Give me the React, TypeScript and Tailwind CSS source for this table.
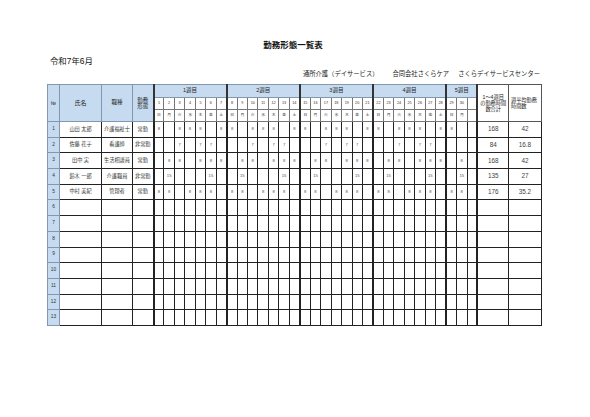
import React from "react";

type Row = {
  no: number;
  name: string;
  role: string;
  type: string;
  val: string;
  days: number[];
  total: string;
  avg: string;
};

const rows: Row[] = [
  { no: 1, name: "山田 太郎", role: "介護福祉士", type: "常勤", val: "8", days: [1, 3, 4, 5, 7, 8, 10, 11, 12, 14, 15, 17, 18, 19, 21, 22, 24, 25, 26, 28, 29], total: "168", avg: "42" },
  { no: 2, name: "佐藤 花子", role: "看護師", type: "非常勤", val: "7", days: [3, 5, 6, 10, 12, 13, 17, 19, 20, 24, 26, 27], total: "84", avg: "16.8" },
  { no: 3, name: "田中 実", role: "生活相談員", type: "常勤", val: "8", days: [2, 3, 5, 6, 7, 9, 10, 12, 13, 14, 16, 17, 19, 20, 21, 23, 24, 26, 27, 28, 30], total: "168", avg: "42" },
  { no: 4, name: "鈴木 一郎", role: "介護職員", type: "非常勤", val: "15", days: [2, 6, 9, 13, 16, 20, 23, 27, 30], total: "135", avg: "27" },
  { no: 5, name: "中村 美紀", role: "管理者", type: "常勤", val: "8", days: [1, 2, 4, 5, 6, 8, 9, 11, 12, 13, 15, 16, 18, 19, 20, 22, 23, 25, 26, 27, 29, 30], total: "176", avg: "35.2" },
];
for (let i = 6; i <= 13; i++) {
  rows.push({ no: i, name: "", role: "", type: "", val: "", days: [], total: "", avg: "" });
}

const days = Array.from({ length: 31 }, (_, i) => i + 1);
const wd = ["日", "月", "火", "水", "木", "金", "土"];
const weeks = [
  { label: "1週目", span: 7 },
  { label: "2週目", span: 7 },
  { label: "3週目", span: 7 },
  { label: "4週目", span: 7 },
  { label: "5週目", span: 3 },
];

const isWeekStart = (d: number) => d === 1 || d === 8 || d === 15 || d === 22 || d === 29;

export default function App() {
  return (
    <div
      className="w-[590px] h-[417px] bg-white text-[#222] overflow-hidden"
      style={{ fontFamily: '"Liberation Sans", "Noto Sans CJK JP", sans-serif' }}
    >
      <div className="ml-[47px] w-[494px] pt-[40px] flex flex-col">
        <div className="text-center text-[8.5px] leading-[10px] font-bold text-[#111] pr-[2px]">勤務形態一覧表</div>
        <div className="mt-[6px] pl-[3px] text-[8.4px] leading-[10px] text-[#111]">令和7年6月</div>
        <div className="mt-[4px] flex justify-end items-center pr-[1px] text-[6.3px] leading-[8px] text-[#222]">
          <span>通所介護（デイサービス）</span>
          <span className="ml-[14px]">合同会社さくらケア</span>
          <span className="ml-[9px]">さくらデイサービスセンター</span>
        </div>
        <table className="mt-[6px] table-fixed border-collapse w-[494px] leading-none">
          <colgroup>
            <col className="w-[12px]" />
            <col className="w-[42px]" />
            <col className="w-[31px]" />
            <col className="w-[21px]" />
            {days.map((d) => (
              <col key={d} className="w-[10.45px]" />
            ))}
            <col className="w-[31px]" />
            <col className="w-[33px]" />
          </colgroup>
          <thead>
            <tr className="h-[13px]">
              <th rowSpan={3} className="bg-[#c7dbf0] border border-[#8497b0] text-[5px] font-normal p-0">№</th>
              <th rowSpan={3} className="bg-[#c7dbf0] border border-[#8497b0] text-[6px] font-normal p-0">氏名</th>
              <th rowSpan={3} className="bg-[#c7dbf0] border border-[#8497b0] text-[5.5px] font-normal p-0">職種</th>
              <th rowSpan={3} className="bg-[#c7dbf0] border border-[#8497b0] text-[5.5px] leading-[6.5px] font-normal p-0">
                勤務
                <br />
                形態
              </th>
              {weeks.map((w) => (
                <th
                  key={w.label}
                  colSpan={w.span}
                  className="bg-[#c7dbf0] border border-[#8497b0] border-l-2 border-l-[#333] text-[5.5px] font-normal p-0"
                >
                  {w.label}
                </th>
              ))}
              <th rowSpan={3} className="border border-[#555] border-l-2 border-l-[#333] text-[5.2px] leading-[6.2px] font-normal p-0">
                1～4週目
                <br />
                の勤務時間
                <br />
                数合計
              </th>
              <th rowSpan={3} className="border border-[#555] text-[5.2px] leading-[6.2px] font-normal p-0 pl-[2px] text-left">
                週平均勤務
                <br />
                時間数
              </th>
            </tr>
            <tr className="h-[12px]">
              {days.map((d) => (
                <th
                  key={d}
                  className={`border border-[#777] ${isWeekStart(d) ? "border-l-2 border-l-[#333]" : ""} text-[3.8px] font-normal p-0 text-[#333]`}
                >
                  {d <= 30 ? d : ""}
                </th>
              ))}
            </tr>
            <tr className="h-[12px]">
              {days.map((d) => (
                <th
                  key={d}
                  className={`border border-[#777] ${isWeekStart(d) ? "border-l-2 border-l-[#333]" : ""} text-[3.8px] font-normal p-0 text-[#333]`}
                >
                  {d <= 30 ? wd[(d - 1) % 7] : ""}
                </th>
              ))}
            </tr>
          </thead>
          <tbody>
            {rows.map((r) => (
              <tr key={r.no} className="h-[15.7px]">
                <td className="bg-[#c7dbf0] border border-[#8497b0] text-center text-[4.8px] p-0 text-[#333]">{r.no}</td>
                <td className="border border-[#222] text-center text-[5.2px] p-0 text-[#333]">{r.name}</td>
                <td className="border border-[#222] text-center text-[5.2px] p-0 text-[#333]">{r.role}</td>
                <td className="border border-[#222] text-center text-[5.2px] p-0 text-[#333]">{r.type}</td>
                {days.map((d) => (
                  <td
                    key={d}
                    className={`border border-[#222] ${isWeekStart(d) ? "border-l-2" : ""} text-center text-[4.2px] p-0 text-[#555]`}
                  >
                    {r.days.includes(d) ? r.val : ""}
                  </td>
                ))}
                <td className="border border-[#222] border-l-2 text-center text-[6.4px] p-0 text-[#444]">{r.total}</td>
                <td className="border border-[#222] text-center text-[6.4px] p-0 text-[#444]">{r.avg}</td>
              </tr>
            ))}
          </tbody>
        </table>
      </div>
    </div>
  );
}
